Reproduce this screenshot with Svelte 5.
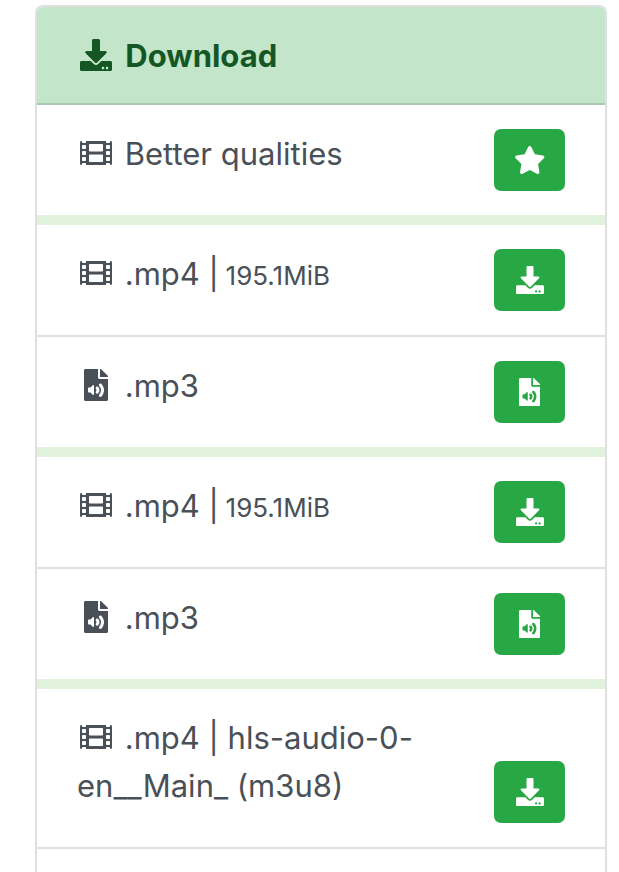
<script lang="ts">
  const icons = {
    film: { box: "0 0 512 512", d: "M488 64h-8v20c0 6.6-5.4 12-12 12h-40c-6.6 0-12-5.4-12-12V64H96v20c0 6.6-5.4 12-12 12H44c-6.6 0-12-5.4-12-12V64h-8C10.7 64 0 74.7 0 88v336c0 13.3 10.7 24 24 24h8v-20c0-6.6 5.4-12 12-12h40c6.6 0 12 5.4 12 12v20h320v-20c0-6.6 5.4-12 12-12h40c6.6 0 12 5.4 12 12v20h8c13.3 0 24-10.7 24-24V88c0-13.3-10.7-24-24-24zM96 372c0 6.6-5.4 12-12 12H44c-6.6 0-12-5.4-12-12v-40c0-6.6 5.4-12 12-12h40c6.6 0 12 5.4 12 12v40zm0-96c0 6.6-5.4 12-12 12H44c-6.6 0-12-5.4-12-12v-40c0-6.6 5.4-12 12-12h40c6.6 0 12 5.4 12 12v40zm0-96c0 6.6-5.4 12-12 12H44c-6.6 0-12-5.4-12-12v-40c0-6.6 5.4-12 12-12h40c6.6 0 12 5.4 12 12v40zm272 208c0 6.6-5.4 12-12 12H156c-6.6 0-12-5.4-12-12v-96c0-6.6 5.4-12 12-12h200c6.6 0 12 5.4 12 12v96zm0-168c0 6.6-5.4 12-12 12H156c-6.6 0-12-5.4-12-12v-96c0-6.6 5.4-12 12-12h200c6.6 0 12 5.4 12 12v96zm112 152c0 6.6-5.4 12-12 12h-40c-6.6 0-12-5.4-12-12v-40c0-6.6 5.4-12 12-12h40c6.6 0 12 5.4 12 12v40zm0-96c0 6.6-5.4 12-12 12h-40c-6.6 0-12-5.4-12-12v-40c0-6.6 5.4-12 12-12h40c6.6 0 12 5.4 12 12v40zm0-96c0 6.6-5.4 12-12 12h-40c-6.6 0-12-5.4-12-12v-40c0-6.6 5.4-12 12-12h40c6.6 0 12 5.4 12 12v40z" },
    download: { box: "0 0 512 512", d: "M216 0h80c13.3 0 24 10.7 24 24v168h87.7c17.8 0 26.7 21.5 14.1 34.1L269.7 378.3c-7.5 7.5-19.8 7.5-27.3 0L90.1 226.1c-12.6-12.6-3.7-34.1 14.1-34.1H192V24c0-13.3 10.7-24 24-24zm296 376v112c0 13.3-10.7 24-24 24H24c-13.3 0-24-10.7-24-24V376c0-13.3 10.7-24 24-24h146.7l49 49c20.1 20.1 52.5 20.1 72.6 0l49-49H488c13.3 0 24 10.7 24 24zm-124 88c0-11-9-20-20-20s-20 9-20 20 9 20 20 20 20-9 20-20zm64 0c0-11-9-20-20-20s-20 9-20 20 9 20 20 20 20-9 20-20z" },
    audio: { box: "0 0 384 512", d: "M224 136V0H24C10.7 0 0 10.7 0 24v464c0 13.3 10.7 24 24 24h336c13.3 0 24-10.7 24-24V160H248c-13.2 0-24-10.8-24-24zm-64 268c0 10.7-12.9 16-20.5 8.5L104 376H76c-6.6 0-12-5.4-12-12v-56c0-6.6 5.4-12 12-12h28l35.5-36.5c7.6-7.6 20.5-2.2 20.5 8.5v136zm33.2-47.6c9.1-9.3 9.1-24.1 0-33.4-22.1-22.8 12.2-56.2 34.4-33.5 27.2 27.9 27.2 72.4 0 100.4-21.8 22.3-56.9-10.4-34.4-33.5zm86-117.1c54.4 55.9 54.4 144.8 0 200.8-21.8 22.4-57-10.3-34.4-33.5 36.2-37.2 36.3-96.5 0-133.8-22.1-22.8 12.3-56.3 34.4-33.5zM384 121.9v6.1H256V0h6.1c6.4 0 12.5 2.5 17 7l97.9 98c4.5 4.5 7 10.6 7 16.9z" },
    star: { box: "0 0 576 512", d: "M259.3 17.8L194 150.2 47.9 171.5c-26.2 3.8-36.7 36.1-17.7 54.6l105.7 103-25 145.5c-4.5 26.3 23.2 46 46.4 33.7L288 439.6l130.7 68.7c23.2 12.2 50.9-7.4 46.4-33.7l-25-145.5 105.7-103c19-18.5 8.5-50.8-17.7-54.6L382 150.2 316.7 17.8c-11.7-23.6-45.6-23.9-57.4 0z" },
  };

  const groups = [
    [{ icon: icons.film, label: "Better qualities", size: "", action: icons.star }],
    [
      { icon: icons.film, label: ".mp4 | ", size: "195.1MiB", action: icons.download },
      { icon: icons.audio, label: ".mp3", size: "", action: icons.audio },
    ],
    [
      { icon: icons.film, label: ".mp4 | ", size: "195.1MiB", action: icons.download },
      { icon: icons.audio, label: ".mp3", size: "", action: icons.audio },
    ],
    [{ icon: icons.film, label: ".mp4 | hls-audio-0-en__Main_ (m3u8)", size: "", action: icons.download }],
  ];
</script>

{#snippet glyph(icon)}
  <svg viewBox={icon.box} aria-hidden="true"><path d={icon.d} fill="currentColor" /></svg>
{/snippet}

<main class="page">
  <section class="card">
    <h2 class="card-header">
      <span class="lead-icon">{@render glyph(icons.download)}</span> Download
    </h2>

    {#each groups as rows, g}
      {#if g > 0}<div class="band"></div>{/if}
      {#each rows as row}
        <div class="item">
          <div class="label">
            <span class="lead-icon">{@render glyph(row.icon)}</span>
            {row.label}{#if row.size}<small>{row.size}</small>{/if}
          </div>
          <button type="button" class="btn">{@render glyph(row.action)}</button>
        </div>
      {/each}
    {/each}
    <div class="item rest"></div>
  </section>
</main>

<style>
  :global(body) {
    background: #fff;
  }

  .page {
    display: flex;
    height: 100vh;
    overflow: hidden;
    padding: 5px 12px 0 35px;
    box-sizing: border-box;
    font-family: Inter, "Liberation Sans", sans-serif;
    color: #495057;
  }

  .card {
    flex: 1;
    min-width: 0;
    min-height: 900px;
    border: 2px solid #dfdfdf;
    border-radius: 8px;
    overflow: hidden;
    background: #fff;
  }

  .card-header {
    margin: 0;
    border-bottom: 2px solid #abc9b2;
    background: #c3e6cb;
    color: #155724;
    padding: 25px 40px 23px;
    font-size: 31px;
    font-weight: 700;
    line-height: 48px;
  }

  .card-header .lead-icon {
    margin-right: 3px;
  }

  .band {
    height: 10px;
    background: #e0f1dc;
  }

  .item {
    display: flex;
    justify-content: space-between;
    gap: 24px;
    padding: 24px 40px;
    font-size: 31px;
    line-height: 48px;
  }

  .item + .item {
    border-top: 2px solid #dfdfdf;
  }

  .label {
    flex: 1;
    min-width: 0;
    padding: 1px 0 13px;
  }

  .label small {
    margin-left: -2px;
    font-size: 26px;
    line-height: 1;
  }

  .lead-icon {
    display: inline-block;
    width: 38px;
    height: 32px;
    margin-right: 1px;
    vertical-align: -4px;
  }

  .lead-icon svg {
    display: block;
    width: 100%;
    height: 100%;
  }

  .btn {
    display: flex;
    flex: none;
    align-self: flex-end;
    align-items: center;
    justify-content: center;
    width: 71px;
    height: 62px;
    border: 0;
    border-radius: 7px;
    background: #28a745;
    color: #fff;
    padding: 0;
  }

  .btn svg {
    display: block;
    height: 28px;
  }

  .rest {
    min-height: 60px;
  }
</style>
